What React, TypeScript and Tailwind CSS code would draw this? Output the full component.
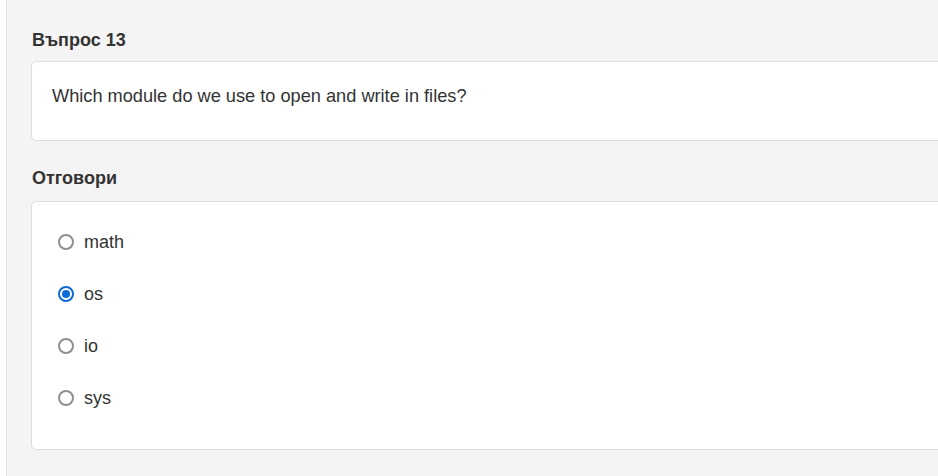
import React from "react";

const options = [
  { label: "math", checked: false },
  { label: "os", checked: true },
  { label: "io", checked: false },
  { label: "sys", checked: false },
];

function Radio({ checked }: { checked: boolean }) {
  if (checked) {
    return (
      <span className="flex h-4 w-4 shrink-0 items-center justify-center rounded-full border-2 border-[#0b6bd8] bg-white">
        <span className="h-2 w-2 rounded-full bg-[#0b6bd8]" />
      </span>
    );
  }
  return <span className="h-4 w-4 shrink-0 rounded-full border-2 border-[#8f8f8f] bg-white" />;
}

export default function App() {
  return (
    <div className="h-[476px] w-[938px] overflow-hidden bg-white font-['Liberation_Sans',Arial,sans-serif] text-[#333]">
      <div className="ml-[6px] h-full border-l border-[#e3e3e3] bg-[#f4f4f4] pl-[24px] pt-[28px]">
        <h2 className="text-[18px] font-bold leading-[24px] pl-[1px]">Въпрос 13</h2>
        <div className="mt-[9px] mr-[-20px] h-[80px] rounded-[5px] border border-[#dcdcdc] bg-white pl-[20px] pt-[22px]">
          <p className="text-[18.2px] leading-[24px]">Which module do we use to open and write in files?</p>
        </div>
        <h2 className="mt-[25px] text-[18px] font-bold leading-[24px] pl-[1px]">Отговори</h2>
        <div className="mt-[11px] mr-[-20px] h-[249px] rounded-[5px] border border-[#dcdcdc] bg-white pl-[26px] pt-[28px]">
          <div className="flex flex-col gap-[28px]">
            {options.map((o) => (
              <label key={o.label} className="flex h-[24px] items-center gap-[10px] text-[18px] leading-[24px]">
                <Radio checked={o.checked} />
                <span>{o.label}</span>
              </label>
            ))}
          </div>
        </div>
      </div>
    </div>
  );
}
